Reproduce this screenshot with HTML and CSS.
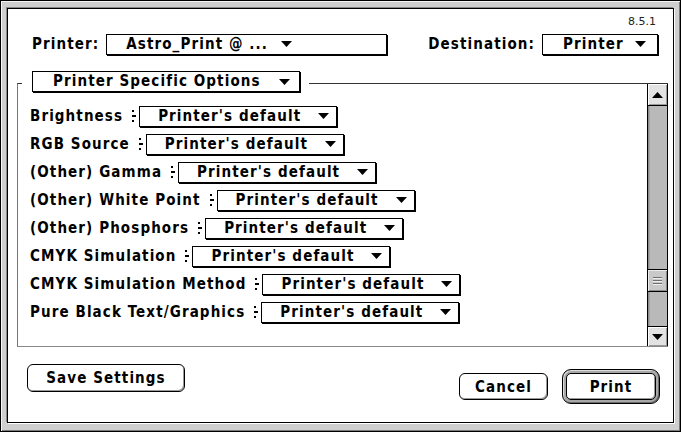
FILE: index.html
```html
<!DOCTYPE html>
<html>
<head>
<meta charset="utf-8">
<link rel="stylesheet" href="styles.css">
</head>
<body>
<div class="window">
  <div class="inner">
    <div class="version">8.5.1</div>
    <div class="header">
      <div class="field">
        <span class="lbl">Printer:</span>
        <div class="popup popup-printer">
          <span class="ptext">Astro_Print @ ...</span>
          <svg class="tri" width="11" height="6" viewBox="0 0 11 6"><polygon points="0,0 11,0 5.5,6" fill="#000"/></svg>
        </div>
      </div>
      <div class="field">
        <span class="lbl">Destination:</span>
        <div class="popup popup-dest">
          <span class="ptext">Printer</span>
          <svg class="tri" width="11" height="6" viewBox="0 0 11 6"><polygon points="0,0 11,0 5.5,6" fill="#000"/></svg>
        </div>
      </div>
    </div>

    <div class="group">
      <div class="group-head">
        <div class="legend">
          <div class="popup popup-legend">
            <span class="ptext">Printer Specific Options</span>
            <svg class="tri" width="11" height="6" viewBox="0 0 11 6"><polygon points="0,0 11,0 5.5,6" fill="#000"/></svg>
          </div>
        </div>
      </div>
      <div class="group-box">
        <div class="list">
          <div class="row"><span class="lbl">Brightness</span><svg class="notch" width="4" height="12" viewBox="0 0 4 12"><rect x="0" y="0" width="2" height="2"/><rect x="0" y="5" width="4" height="2"/><rect x="0" y="10" width="2" height="2"/></svg><div class="popup popup-row"><span class="ptext">Printer's default</span><svg class="tri" width="11" height="6" viewBox="0 0 11 6"><polygon points="0,0 11,0 5.5,6" fill="#000"/></svg></div></div>
          <div class="row"><span class="lbl">RGB Source</span><svg class="notch" width="4" height="12" viewBox="0 0 4 12"><rect x="0" y="0" width="2" height="2"/><rect x="0" y="5" width="4" height="2"/><rect x="0" y="10" width="2" height="2"/></svg><div class="popup popup-row"><span class="ptext">Printer's default</span><svg class="tri" width="11" height="6" viewBox="0 0 11 6"><polygon points="0,0 11,0 5.5,6" fill="#000"/></svg></div></div>
          <div class="row"><span class="lbl">(Other) Gamma</span><svg class="notch" width="4" height="12" viewBox="0 0 4 12"><rect x="0" y="0" width="2" height="2"/><rect x="0" y="5" width="4" height="2"/><rect x="0" y="10" width="2" height="2"/></svg><div class="popup popup-row"><span class="ptext">Printer's default</span><svg class="tri" width="11" height="6" viewBox="0 0 11 6"><polygon points="0,0 11,0 5.5,6" fill="#000"/></svg></div></div>
          <div class="row"><span class="lbl">(Other) White Point</span><svg class="notch" width="4" height="12" viewBox="0 0 4 12"><rect x="0" y="0" width="2" height="2"/><rect x="0" y="5" width="4" height="2"/><rect x="0" y="10" width="2" height="2"/></svg><div class="popup popup-row"><span class="ptext">Printer's default</span><svg class="tri" width="11" height="6" viewBox="0 0 11 6"><polygon points="0,0 11,0 5.5,6" fill="#000"/></svg></div></div>
          <div class="row"><span class="lbl">(Other) Phosphors</span><svg class="notch" width="4" height="12" viewBox="0 0 4 12"><rect x="0" y="0" width="2" height="2"/><rect x="0" y="5" width="4" height="2"/><rect x="0" y="10" width="2" height="2"/></svg><div class="popup popup-row"><span class="ptext">Printer's default</span><svg class="tri" width="11" height="6" viewBox="0 0 11 6"><polygon points="0,0 11,0 5.5,6" fill="#000"/></svg></div></div>
          <div class="row"><span class="lbl">CMYK Simulation</span><svg class="notch" width="4" height="12" viewBox="0 0 4 12"><rect x="0" y="0" width="2" height="2"/><rect x="0" y="5" width="4" height="2"/><rect x="0" y="10" width="2" height="2"/></svg><div class="popup popup-row"><span class="ptext">Printer's default</span><svg class="tri" width="11" height="6" viewBox="0 0 11 6"><polygon points="0,0 11,0 5.5,6" fill="#000"/></svg></div></div>
          <div class="row"><span class="lbl">CMYK Simulation Method</span><svg class="notch" width="4" height="12" viewBox="0 0 4 12"><rect x="0" y="0" width="2" height="2"/><rect x="0" y="5" width="4" height="2"/><rect x="0" y="10" width="2" height="2"/></svg><div class="popup popup-row"><span class="ptext">Printer's default</span><svg class="tri" width="11" height="6" viewBox="0 0 11 6"><polygon points="0,0 11,0 5.5,6" fill="#000"/></svg></div></div>
          <div class="row"><span class="lbl">Pure Black Text/Graphics</span><svg class="notch" width="4" height="12" viewBox="0 0 4 12"><rect x="0" y="0" width="2" height="2"/><rect x="0" y="5" width="4" height="2"/><rect x="0" y="10" width="2" height="2"/></svg><div class="popup popup-row"><span class="ptext">Printer's default</span><svg class="tri" width="11" height="6" viewBox="0 0 11 6"><polygon points="0,0 11,0 5.5,6" fill="#000"/></svg></div></div>
        </div>
        <div class="scrollbar">
          <div class="sb-arrow sb-up"><svg width="11" height="6" viewBox="0 0 11 6"><polygon points="0,6 11,6 5.5,0" fill="#000"/></svg></div>
          <div class="sb-track">
            <div class="sb-thumb">
              <span class="grip"></span><span class="grip"></span><span class="grip"></span>
            </div>
          </div>
          <div class="sb-arrow sb-down"><svg width="11" height="6" viewBox="0 0 11 6"><polygon points="0,0 11,0 5.5,6" fill="#000"/></svg></div>
        </div>
      </div>
    </div>

    <div class="buttons">
      <div class="btn btn-save">Save Settings</div>
      <div class="spacer"></div>
      <div class="btn btn-cancel">Cancel</div>
      <div class="default-ring">
        <div class="btn btn-print">Print</div>
      </div>
    </div>
  </div>
</div>
</body>
</html>
```
FILE: styles.css
```css
html, body {
  margin: 0;
  padding: 0;
  background: #fff;
}
body {
  width: 681px;
  height: 432px;
  overflow: hidden;
  font-family: "DejaVu Sans Condensed", "DejaVu Sans", sans-serif;
  font-stretch: condensed;
  font-weight: bold;
  font-size: 15px;
  letter-spacing: 1.1px;
  color: #000;
}
.window {
  box-sizing: border-box;
  width: 681px;
  height: 432px;
  border: 1px solid #000;
  background: #cfcfcf;
  padding: 7px 6px 8px 6px;
  box-shadow: inset 1px 1px 0 #f4f4f4, inset -1px -1px 0 #7a7a7a;
}
.inner {
  box-sizing: border-box;
  height: 100%;
  border: 1px solid #000;
  background: #fff;
  display: flex;
  flex-direction: column;
  box-shadow: -1px -1px 0 #888, 1px 1px 0 #fff;
}
.version {
  margin-top: 7px;
  padding-right: 17px;
  text-align: right;
  font-family: "DejaVu Sans", sans-serif;
  font-stretch: normal;
  font-weight: normal;
  font-size: 11px;
  letter-spacing: 0;
  line-height: 12px;
  height: 12px;
  color: #222;
}
.header {
  margin-top: 5px;
  padding: 0 15px 0 24px;
  display: flex;
  justify-content: space-between;
  align-items: center;
  height: 22px;
}
.field {
  display: flex;
  align-items: center;
}
.field .lbl {
  margin-right: 7px;
}
.lbl {
  white-space: nowrap;
}
.popup {
  box-sizing: border-box;
  display: flex;
  align-items: center;
  height: 21px;
  border: 1px solid #000;
  box-shadow: 1px 1px 0 #000;
  background: #fff;
  white-space: nowrap;
}
.ptext {
  line-height: 19px;
}
.tri {
  display: block;
  flex: none;
}
.popup-printer {
  width: 281px;
  padding-left: 19px;
}
.popup-printer .tri {
  margin-left: 13px;
}
.popup-dest {
  width: 116px;
  padding: 0 11px 0 20px;
}
.popup-dest .tri,
.popup-legend .tri,
.popup-row .tri {
  margin-left: auto;
}
.group {
  margin: 16px 5px 0 9px;
}
.group-head {
  position: relative;
  z-index: 1;
  display: flex;
  height: 22px;
  margin-bottom: -10px;
  padding-left: 5px;
}
.legend {
  background: #fff;
  padding: 0 9px 0 10px;
}
.popup-legend {
  width: 268px;
  padding: 0 9px 0 20px;
}
.group-box {
  box-sizing: border-box;
  height: 264px;
  display: flex;
  border-top: 1px solid #333;
  border-left: 1px solid #777;
  border-bottom: 1px solid #888;
}
.list {
  flex: 1;
  padding: 18px 0 0 12px;
}
.row {
  display: flex;
  align-items: center;
  height: 28px;
}
.notch {
  display: block;
  flex: none;
  margin: 0 3px 0 9px;
  fill: #000;
}
.popup-row {
  width: 198px;
  padding: 0 7px 0 18px;
}
.scrollbar {
  box-sizing: border-box;
  width: 21px;
  border-left: 1px solid #000;
  border-right: 1px solid #000;
  display: flex;
  flex-direction: column;
}
.sb-arrow {
  display: flex;
  align-items: center;
  justify-content: center;
  background: #e2e2e2;
  box-shadow: inset 1px 1px 0 #fff, inset -1px -1px 0 #999;
}
.sb-up {
  height: 21px;
  border-bottom: 1px solid #000;
}
.sb-down {
  height: 19px;
  border-top: 1px solid #000;
}
.sb-track {
  flex: 1;
  background: #b9b9b9;
  box-shadow: inset 1px 0 0 #8e8e8e, inset 2px 0 0 #a4a4a4;
}
.sb-thumb {
  box-sizing: border-box;
  margin-top: 163px;
  height: 23px;
  border-top: 1px solid #000;
  border-bottom: 1px solid #000;
  background: #c9c9c9;
  box-shadow: inset 1px 1px 0 #ececec, inset -1px -1px 0 #8a8a8a;
  display: flex;
  flex-direction: column;
  align-items: center;
  justify-content: center;
  gap: 2px;
}
.grip {
  display: block;
  width: 9px;
  height: 1px;
  background: #6e6e6e;
  box-shadow: 0 1px 0 #f0f0f0;
}
.buttons {
  display: flex;
  align-items: flex-start;
  margin-top: 17px;
  padding: 0 13px 0 19px;
}
.spacer {
  flex: 1;
}
.btn {
  box-sizing: border-box;
  display: flex;
  align-items: center;
  justify-content: center;
  border: 1px solid #000;
  border-radius: 6px;
  background: #fff;
  box-shadow: inset 1px 1px 0 #fff, inset -1px -1px 0 #9a9a9a;
  white-space: nowrap;
}
.btn-save {
  width: 158px;
  height: 28px;
}
.btn-cancel {
  width: 89px;
  height: 27px;
  margin-top: 9px;
  margin-right: 14px;
}
.default-ring {
  box-sizing: border-box;
  margin-top: 5px;
  width: 98px;
  height: 35px;
  padding: 3px;
  border: 1px solid #000;
  border-radius: 9px;
  background: #a8a8a8;
  box-shadow: inset 1px 1px 0 #dcdcdc, inset -1px -1px 0 #6c6c6c;
}
.btn-print {
  width: 100%;
  height: 100%;
  border-radius: 5px;
}
```
